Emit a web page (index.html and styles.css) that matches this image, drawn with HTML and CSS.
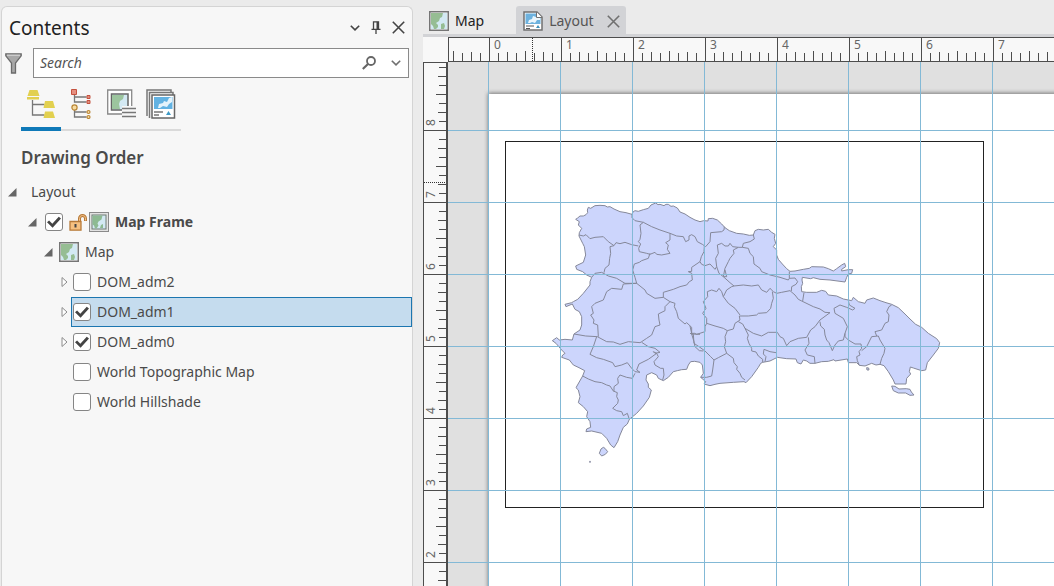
FILE: index.html
```html
<!DOCTYPE html>
<html lang="en">
<head>
<meta charset="utf-8">
<title>Layout</title>
<link rel="stylesheet" href="styles.css">
</head>
<body>
<svg class="defs" aria-hidden="true">
  <defs>
    <symbol id="map-icon" viewBox="0 0 20 20">
      <rect x=".75" y=".75" width="18.5" height="18.5" fill="#fff" stroke="#757575" stroke-width="1.5"/>
      <path d="M2 2h16v16H2z" fill="#d3e9f3"/>
      <path d="M2 2h12l-1 4-2 1-1 3-3 2 2 2v2l-2 2H5l-1-3-2-2zM12 13l3-1 1 3-1 3h-3z" fill="#96bd93"/>
    </symbol>
    <symbol id="frame-icon" viewBox="0 0 20 20">
      <rect x=".5" y=".5" width="19" height="19" fill="#e2e2e2" stroke="#8a8a8a"/>
      <rect x="3" y="3" width="14" height="14" fill="#d3e9f3" stroke="#6e7a72"/>
      <path d="M3.500 3.500h10l-1 4-3 2-1 2 1 2-2 3H6l-1-3-1.500-1zM12 13l2-1v4h-3z" fill="#8dba92"/>
    </symbol>
    <symbol id="chevron" viewBox="0 0 10 6"><path d="M.8.8 5 4.900 9.200.8" fill="none" stroke="currentColor" stroke-width="1.600"/></symbol>
    <symbol id="cross" viewBox="0 0 13 13"><path d="M.8.8l11.400 11.400M12.200.8.8 12.200" fill="none" stroke="currentColor" stroke-width="1.600"/></symbol>
    <symbol id="open" viewBox="0 0 9 9"><path d="M8.500 0v8.500H0z" fill="#666"/></symbol>
    <symbol id="closed" viewBox="0 0 7 12"><path d="M1 1.500v9L6 6z" fill="#fff" stroke="#8c8c8c"/></symbol>
  </defs>
</svg>
<div class="app">
  <aside class="contents">
    <header class="title-bar">
      <h1>Contents</h1>
      <button class="icon-button" aria-label="Options"><svg width="10" height="6"><use href="#chevron"/></svg></button>
      <button class="icon-button" aria-label="Pin"><svg width="10" height="13" viewBox="0 0 10 13"><path d="M2.500 8V.8h5V8M.5 8.300h9M5 8.500V13" fill="none" stroke="#444" stroke-width="1.300"/><path d="M5.500.8h2V8h-2z" fill="#444"/></svg></button>
      <button class="icon-button" aria-label="Close"><svg width="13" height="13"><use href="#cross"/></svg></button>
    </header>
    <div class="search-row">
      <button class="icon-button" aria-label="Filter"><svg width="17" height="21" viewBox="0 0 17 21"><path d="M.8.8h15.400v2L10.500 10v10h-4V10L.8 2.800z" fill="#a8a8a8" stroke="#6b6b6b" stroke-width="1.300"/><path d="M2 2.200h13" stroke="#ddd"/></svg></button>
      <div class="search-box">
        <input type="text" placeholder="Search" aria-label="Search">
        <button class="icon-button" aria-label="Run search"><svg width="14" height="14" viewBox="0 0 14 14"><circle cx="9" cy="5" r="4" fill="none" stroke="#666" stroke-width="1.800"/><path d="M6 8 .8 13" stroke="#666" stroke-width="2.200"/></svg></button>
        <button class="icon-button muted" aria-label="Search options"><svg width="10" height="6"><use href="#chevron"/></svg></button>
      </div>
    </div>
    <nav class="views" aria-label="List by">
      <button class="view active" aria-label="Drawing order"><svg width="28" height="30" viewBox="0 0 28 30"><path d="M5.500 11v15h12M5.500 15.500h12" fill="none" stroke="#777" stroke-width="1.300"/><path d="M2.500 1h8l2 6H.5zM0 8h12v2.500H0zM18 12h8l2 7H16.500zM18 22.500h8l2 6.500H16.500z" fill="#e2d04f"/></svg></button>
      <button class="view" aria-label="Data source"><svg width="22" height="30" viewBox="0 0 22 30"><path d="M4.500 6v7h12M4.500 8h12M4.500 21v7h12M4.500 23h12" fill="none" stroke="#777" stroke-width="1.300"/><g fill="#e58f80" stroke="#c4523f"><path d="M1.500.5h5v5h-5zM17 6.500h3v3h-3zM17 11.500h3v3h-3z"/></g><g fill="#f8dca0" stroke="#b98535" stroke-width="1.200"><circle cx="4.500" cy="18.500" r="2.600"/><circle cx="18.500" cy="23" r="1.500"/><circle cx="18.500" cy="28" r="1.500"/></g></svg></button>
      <button class="view" aria-label="Map frames"><svg width="30" height="30" viewBox="0 0 30 30"><path d="M1.700 1h24v24h-24z" fill="#fff" stroke="#888" stroke-width="1.300"/><path d="M5.500 5h16.500v16H5.500z" fill="#d3e9f3" stroke="#666" stroke-width="1.500"/><path d="M6 6h12l-1 4-3 2-1 3 1 5H6z" fill="#9cc59e"/><path d="M16 17h14v12H16z" fill="#f7f7f7"/><path d="M16 19.500h14M16 23.500h14M16 27.500h14" stroke="#777" stroke-width="1.500"/></svg></button>
      <button class="view" aria-label="Map series"><svg width="30" height="30" viewBox="0 0 30 30"><path d="M1 27V1h24v3M3.500 29V3.500H27V6" fill="none" stroke="#777" stroke-width="1.500"/><path d="M6 6h22.500v23H6z" fill="#fff" stroke="#666" stroke-width="1.500"/><path d="M8 8h18.500v12H8z" fill="#62b2e2"/><path d="M12 19l1-4 4-1 1-2 3 1 2-4 3-1v5l-3 2-2 3-4-1-3 2z" fill="#e4f3fb"/><path d="M8 23h9M8 26h5" stroke="#777" stroke-width="1.300"/><path d="M22.500 22l2.500 4h-5z" fill="#3d9ac7"/></svg></button>
    </nav>
    <h2>Drawing Order</h2>
    <ul class="tree">
      <li class="row level-0"><button class="twisty" aria-label="Collapse Layout"><svg width="9" height="9"><use href="#open"/></svg></button><span class="root-name">Layout</span></li>
      <li class="row level-1"><button class="twisty" aria-label="Collapse Map Frame"><svg width="9" height="9"><use href="#open"/></svg></button><input type="checkbox" id="frame" checked><svg class="lock" width="19" height="17" viewBox="0 0 19 17"><path d="M10.500 7V4.500a3 3 0 0 1 6 0V7" fill="none" stroke="#b77a39" stroke-width="3"/><path d="M10.500 7V4.500a3 3 0 0 1 6 0V6.500" fill="none" stroke="#f6c58c"/><path d="M1 7.500h11v8.700H1z" fill="#f6c080" stroke="#b77a39" stroke-width="1.300"/><path d="M6.500 10v3.500" stroke="#444" stroke-width="2"/></svg><svg width="20" height="20"><use href="#frame-icon"/></svg><label class="strong" for="frame">Map Frame</label></li>
      <li class="row level-2"><button class="twisty" aria-label="Collapse Map"><svg width="9" height="9"><use href="#open"/></svg></button><svg width="20" height="20"><use href="#map-icon"/></svg><span>Map</span></li>
      <li class="row level-3"><button class="twisty" aria-label="Expand DOM_adm2"><svg width="7" height="12"><use href="#closed"/></svg></button><div class="item"><input type="checkbox" id="adm2"><label for="adm2">DOM_adm2</label></div></li>
      <li class="row level-3"><button class="twisty" aria-label="Expand DOM_adm1"><svg width="7" height="12"><use href="#closed"/></svg></button><div class="item selected"><input type="checkbox" id="adm1" checked><label for="adm1">DOM_adm1</label></div></li>
      <li class="row level-3"><button class="twisty" aria-label="Expand DOM_adm0"><svg width="7" height="12"><use href="#closed"/></svg></button><div class="item"><input type="checkbox" id="adm0" checked><label for="adm0">DOM_adm0</label></div></li>
      <li class="row level-3"><span class="twisty"></span><div class="item"><input type="checkbox" id="topo"><label for="topo">World Topographic Map</label></div></li>
      <li class="row level-3"><span class="twisty"></span><div class="item"><input type="checkbox" id="hill"><label for="hill">World Hillshade</label></div></li>
    </ul>
  </aside>
  <main class="workspace">
    <div class="tabs">
      <button class="tab"><svg width="20" height="20"><use href="#map-icon"/></svg>Map</button>
      <div class="tab current">
        <button class="tab-name"><svg width="20" height="20" viewBox="0 0 20 20"><path d="M1 1h13l5 5v13H1z" fill="#fff" stroke="#707070" stroke-width="1.500"/><path d="M2.500 2.500h11l4 4V13h-15z" fill="#6db2de"/><path d="M5 12l1-3 3-1 1-3 3 1 0-2 2 2 2 1v2l-3 0-2 3-3-1-2 1z" fill="#eaf6fc"/><path d="M13.500 1v5.500H19" fill="#fff" stroke="#707070"/><path d="M3 15h8M3 17.500h4" stroke="#555"/><path d="M15 14l2 3h-4z" fill="#3d8fb8"/></svg>Layout</button>
        <button class="icon-button muted" aria-label="Close Layout"><svg width="13" height="13"><use href="#cross"/></svg></button>
      </div>
    </div>
    <div class="layout-view">
      <div class="corner"></div>
      <svg class="ruler-x" aria-label="Horizontal ruler">
        <defs><pattern id="ticks-x" x="41" y="0" width="72" height="25" patternUnits="userSpaceOnUse"><path d="M.5 0v25M9.500 16v9M18.500 15v10M27.500 16v9M36.500 14v11M45.500 16v9M54.500 15v10M63.500 16v9" stroke="#4d4d4d"/></pattern></defs>
        <rect width="100%" height="25" fill="#f8f8f8"/>
        <rect width="100%" height="25" fill="url(#ticks-x)"/>
        <path class="ruler-line" d="M0 .5h4000M0 24.500h4000M.5 0v25"/>
        <path class="cursor" d="M84.500 1v23"/>
        <g class="numbers"><text x="46" y="12">0</text><text x="118" y="12">1</text><text x="190" y="12">2</text><text x="262" y="12">3</text><text x="334" y="12">4</text><text x="406" y="12">5</text><text x="478" y="12">6</text><text x="550" y="12">7</text></g>
      </svg>
      <svg class="ruler-y" aria-label="Vertical ruler">
        <defs><pattern id="ticks-y" x="0" y="68" width="25" height="72" patternUnits="userSpaceOnUse"><path d="M0 .5h25M16 9.500h9M15 18.500h10M16 27.500h9M13 36.500h12M16 45.500h9M15 54.500h10M16 63.500h9" stroke="#4d4d4d"/></pattern></defs>
        <rect width="25" height="100%" fill="#f8f8f8"/>
        <rect width="25" height="100%" fill="url(#ticks-y)"/>
        <path class="ruler-line" d="M.5 0v4000M0 .5h25"/>
        <path d="M24 0v4000" stroke="#4d4d4d" stroke-width="2"/>
        <path class="cursor" d="M1 120.500h22"/>
        <g class="numbers"><text transform="translate(12 64) rotate(-90)">8</text><text transform="translate(12 136) rotate(-90)">7</text><text transform="translate(12 208) rotate(-90)">6</text><text transform="translate(12 280) rotate(-90)">5</text><text transform="translate(12 352) rotate(-90)">4</text><text transform="translate(12 424) rotate(-90)">3</text><text transform="translate(12 496) rotate(-90)">2</text></g>
      </svg>
      <svg class="canvas" role="img" aria-label="Map of the Dominican Republic">
        <defs>
          <pattern id="guides" x="40" y="68" width="72" height="72" patternUnits="userSpaceOnUse"><path d="M.5 0v72M0 .5h72" stroke="#83b9d6"/></pattern>
          <filter id="page-shadow" x="-5%" y="-5%" width="110%" height="110%"><feGaussianBlur stdDeviation="2"/></filter>
        </defs>
        <rect width="100%" height="100%" fill="#e0e0e0"/>
        <rect x="40" y="31" width="3000" height="3000" fill="#777" filter="url(#page-shadow)"/>
        <rect x="41" y="32" width="3000" height="3000" fill="#fff"/>
        <rect x="57.500" y="79.500" width="478" height="366" fill="none" stroke="#222"/>
        <g class="country" transform="translate(92 128) scale(.33333)">
          <path class="land" d="M107 88 113 84 120 78 130 78 138 74 143 68 142 60 145 52 152 55 165 47 180 46 195 47 202 51 210 50 222 57 240 65 258 68 276 73 279 66 285 62 295 64 310 59 325 55 333 45 347 39 354 44 360 43 372 47 378 43 385 43 393 49 400 48 412 54 420 66 435 72 450 82 465 90 480 95 491 92 504 93 505 86 518 85 532 90 545 102 555 113 568 122 590 130 610 132 628 136 640 135 645 122 655 118 670 120 685 118 695 127 705 133 703 145 707 160 700 170 710 180 710 195 715 208 727 222 740 236 750 244 765 243 790 238 808 235 815 230 850 231 865 236 880 243 890 236 905 225 914 220 917 230 905 238 905 243 925 239 938 239 935 250 925 252 920 262 915 276 900 274 870 270 840 268 820 263 812 266 787 262 786 270 788 280 784 290 785 305 800 307 830 307 845 301 857 304 865 315 890 318 910 327 935 332 940 322 955 335 975 340 980 330 1000 324 1020 332 1038 338 1055 343 1075 353 1095 372 1110 387 1127 403 1145 412 1165 430 1190 446 1199 458 1195 475 1180 495 1162 518 1157 540 1145 542 1120 534 1111 531 1108 545 1112 552 1100 565 1098 582 1065 582 1060 570 1045 545 1032 527 1020 523 1008 525 995 520 975 528 958 526 950 518 925 518 922 507 885 513 882 509 865 514 845 515 825 520 810 520 800 513 790 510 783 522 772 518 768 507 740 506 712 502 690 513 668 517 662 520 655 532 635 560 618 578 612 575 580 577 540 580 525 583 510 587 492 582 497 575 482 562 490 550 487 525 480 517 464 514 452 515 445 525 440 538 425 539 412 542 400 545 385 562 370 572 355 565 350 555 335 548 320 555 318 570 325 582 325 592 334 600 328 622 310 648 290 670 268 688 262 702 250 712 240 735 233 755 222 773 212 765 200 745 185 730 155 723 138 725 140 717 152 712 150 695 140 680 143 665 130 650 115 638 120 620 115 600 108 593 128 558 134 542 117 533 100 525 88 510 65 502 68 495 75 490 65 480 48 460 37 452 50 443 58 450 75 448 97 450 102 432 120 420 125 405 125 380 118 365 105 358 97 342 78 350 75 343 95 338 100 335 113 328 130 310 150 285 150 275 155 262 140 255 128 245 110 238 107 228 130 217 137 195 133 170 128 160 117 138 118 128 125 115 115 105 118 95 107 88Z"/>
          <path class="land" d="M190 772l5 3 8 10-7 8-11 5-7-8 5-13zM149 814h2v3h-2zM1055 588l10 1 12 8 22-1 11 2 4 8 8 9-12 1-13-7-22 0-15-7zM980 533l6 1 1 6-6 0z"/>
          <path class="border" d="M117 135 130 138 138 134 150 146 165 142 190 140 205 155 222 167 228 158 240 161 255 157 275 164 295 168M222 167 210 170 212 190 209 205 207 225 195 235 192 248M155 262 165 250 185 247 205 258 230 265 255 280 290 280M276 73 276 83 285 92 310 97 335 110 360 120 390 130 410 138 430 140 437 155 447 150 447 138 455 134 465 140 472 155 487 163 497 170 510 155 512 128 545 125 552 120 553 110M310 97 300 105 303 130 300 148 295 155 302 162 296 175 298 185 320 190 330 193 345 187 350 193 365 195 390 190 382 178 385 165 377 158 390 150 390 130M330 190 325 205 305 212 298 217 283 222 278 240 285 262 290 280 315 300 320 310 345 325 370 322 390 335M370 322 370 307 400 298 420 290 440 285 448 275 457 270 455 250 445 245 455 244 455 232 480 215 485 223 495 227 510 222 525 238 530 230 527 205 535 190 532 165 545 160 555 168 565 168 570 160 578 170 595 172 607 172 625 175 630 190 640 200 642 222 660 235 665 245 690 255 720 262 745 270 748 265 765 264 773 275 768 283 755 290 754 303M493 168 492 185 484 200 480 215M595 172 580 180 582 190 570 205 565 215 555 235 550 260 570 278 582 288 610 285 635 288 655 285 665 300 680 307 690 295 700 305 710 310 725 307 750 302 765 315 775 328 785 333 820 350 840 357 855 367 870 368M530 230 537 250 550 260 560 260 555 240M607 172 610 160 630 155 643 147 640 135M748 245 748 265M792 308 788 333M550 320 560 300 575 290 582 288M697 305 700 325 695 340 692 355 680 368 655 370 650 375 625 378 598 378 600 390 585 400 580 417 562 422M502 305 515 300 530 305 537 295 545 305 550 320 565 340 585 355 600 375M502 305 503 320 490 335 498 355 488 370 500 385 500 400 495 410 495 425 470 433 464 430 455 430 450 408M500 400 525 408 550 415 562 422 555 440 557 455 553 470 560 490 535 503 522 510 518 540 515 558 500 562 482 562M595 395 608 402 615 415 640 430 665 438 685 427 712 427 720 440 730 445 740 467 750 455 775 445 800 442 812 420 825 410 840 390 870 368M615 415 625 435 622 445 627 460 635 475 635 483 648 486 655 498 668 508 668 517M675 515 678 500 670 492 672 478 690 485 708 488M560 490 580 505 582 518 592 530 590 538 600 550 605 562 615 570M450 430 460 433 462 460 480 472 495 483 512 500 522 510M805 442 807 460 795 480 802 495 823 500 825 520M840 395 842 408 853 418 855 435 860 450 867 458 877 482 885 465 895 453 910 450 915 430 922 410 910 385 885 370 882 355 900 345 920 352 938 360 945 355 928 345 925 332M915 430 915 440 925 450 945 462 963 462 965 475 957 485 960 495 950 500 952 512 958 526M965 482 980 470 995 440 1015 438 1020 450 1035 475 1032 490 1025 505 1020 523M1010 438 1005 425 1025 420 1035 400 1045 395 1047 375 1040 365 1047 350 1055 345M390 335 405 340 403 350 410 365 415 385 435 402 440 398 455 412 455 432 462 455 465 470 478 482 490 483M455 432 480 433M390 335 375 350 375 362 355 372 357 390 360 405 345 410 335 435 320 445 305 455 300 458 265 455 240 463 220 456 200 455 172 440 137 438 102 432M175 440 173 405 160 400 162 390 152 375 160 370 155 350 165 340 190 330 200 305 215 295 245 298 250 282 290 280M170 440 160 470 150 493 170 503 190 508 218 518 225 530 245 525 262 518 275 535 285 545 300 547 290 540 297 522 325 508 350 490 340 485 345 490 360 487 345 475 325 470 305 457M350 490 355 500 342 515 345 525 362 535 370 535 372 555 368 570M285 550 277 565 260 562 240 555 233 565 235 580 222 590 222 605M128 558 145 567 165 575 185 578 200 585 210 588 220 603 232 608 230 620 235 630 233 640 218 655 230 662 245 665 250 677 262 670 268 688"/>
        </g>
        <rect width="100%" height="100%" fill="url(#guides)"/>
      </svg>
    </div>
  </main>
</div>
</body>
</html>
```
FILE: styles.css
```css
* { box-sizing: border-box; }

body {
  margin: 0;
  background: #ebebeb;
  color: #4a4a4a;
  font: 14px/20px "Noto Sans", "Open Sans", sans-serif;
}

button {
  margin: 0;
  padding: 0;
  border: 0;
  background: none;
  color: inherit;
  font: inherit;
}

svg { display: block; flex: none; }
.defs { position: absolute; width: 0; height: 0; }

.app {
  display: grid;
  grid-template-columns: 413px minmax(0, 1fr);
  gap: 10px;
  height: 100vh;
  padding-top: 6px;
}

.contents {
  min-width: 0;
  margin-left: 1px;
  border: 1px solid #d4d4d4;
  border-bottom: 0;
  border-radius: 6px 6px 0 0;
  background: #f7f7f7;
}

.title-bar {
  display: flex;
  align-items: center;
  gap: 11px;
  height: 41px;
  padding: 0 7px;
}

h1 {
  flex: 1;
  margin: 0;
  color: #222;
  font-size: 19px;
  font-weight: 400;
  line-height: 24px;
}

.icon-button { display: grid; place-items: center; color: #444; }
.muted { color: #707070; }

.search-row {
  display: flex;
  align-items: center;
  gap: 11px;
  padding: 0 3px;
}

.search-box {
  display: flex;
  flex: 1;
  align-items: center;
  gap: 15px;
  height: 30px;
  padding: 0 7px 0 6px;
  border: 1px solid #8a8a8a;
  background: #fff;
}

.search-box input {
  flex: 1;
  min-width: 0;
  padding: 0;
  border: 0;
  outline: 0;
  background: none;
  font: italic 14px/20px "Noto Sans", "Open Sans", sans-serif;
}

.search-box input::placeholder { color: #555; opacity: 1; }

.views {
  display: flex;
  width: 160px;
  margin: 7px 0 0 19px;
  box-shadow: inset 0 -2px #dadada;
}

.view {
  display: grid;
  flex: 1;
  place-items: center;
  padding: 4px 0 8px;
  border-bottom: 4px solid transparent;
}

.view.active { border-color: #0f79b8; }

h2 {
  margin: 15px 0 7px 19px;
  font-size: 17px;
  font-weight: 600;
  line-height: 24px;
}

.tree { margin: 0; padding: 0; list-style: none; }

.row {
  display: flex;
  align-items: center;
  gap: 6px;
  height: 30px;
}

.level-0 { padding-left: 6px; }
.level-1 { padding-left: 26px; }
.level-2 { padding-left: 42px; }
.level-3 { gap: 2px; padding-left: 58px; }
.root-name { padding-left: 8px; }

.twisty { display: grid; flex: none; place-items: center; width: 9px; }
.level-1 .twisty { margin-right: 2px; }
.level-1 svg + svg { margin-left: -5px; }
.strong { font-weight: 700; }

.item {
  display: flex;
  flex: 1;
  align-items: center;
  gap: 6px;
  height: 30px;
  padding-left: 1px;
  border: 1px solid transparent;
}

.item.selected { border-color: #1c76b0; background: #c5dcee; }

input[type="checkbox"] {
  display: grid;
  flex: none;
  place-items: center;
  width: 18px;
  height: 18px;
  margin: 0;
  border: 1px solid #858585;
  border-radius: 3px;
  background: #fff;
  appearance: none;
}

input[type="checkbox"]:checked::before {
  width: 14px;
  height: 12px;
  background: #444;
  clip-path: polygon(0 52%, 15% 38%, 38% 65%, 84% 6%, 100% 20%, 40% 98%);
  content: "";
}

.workspace {
  display: flex;
  flex-direction: column;
  min-width: 0;
}

.tabs {
  display: flex;
  gap: 32px;
  padding-left: 6px;
  border-bottom: 3px solid #d2d3d6;
}

.tab, .tab-name { display: flex; align-items: center; gap: 6px; }
.tab { height: 28px; padding-top: 2px; color: #222; }

.current {
  gap: 13px;
  padding: 2px 6px 0 7px;
  border-radius: 3px 3px 0 0;
  background: #d2d3d6;
  color: #555;
}

.layout-view {
  display: grid;
  flex: 1;
  grid-template-rows: 25px minmax(0, 1fr);
  grid-template-columns: 25px minmax(0, 1fr);
  min-height: 0;
}

.corner { background: #f8f8f8; }
.ruler-x, .ruler-y, .canvas { width: 100%; height: 100%; }
.ruler-line { fill: none; stroke: #4d4d4d; }
.cursor { fill: none; stroke: #333; stroke-dasharray: 1 1; }
.numbers { fill: #666; font-size: 12px; }

.country path {
  stroke: #85889a;
  stroke-linejoin: round;
  vector-effect: non-scaling-stroke;
}

.land { fill: #ccd5fc; }
.border { fill: none; }
```
